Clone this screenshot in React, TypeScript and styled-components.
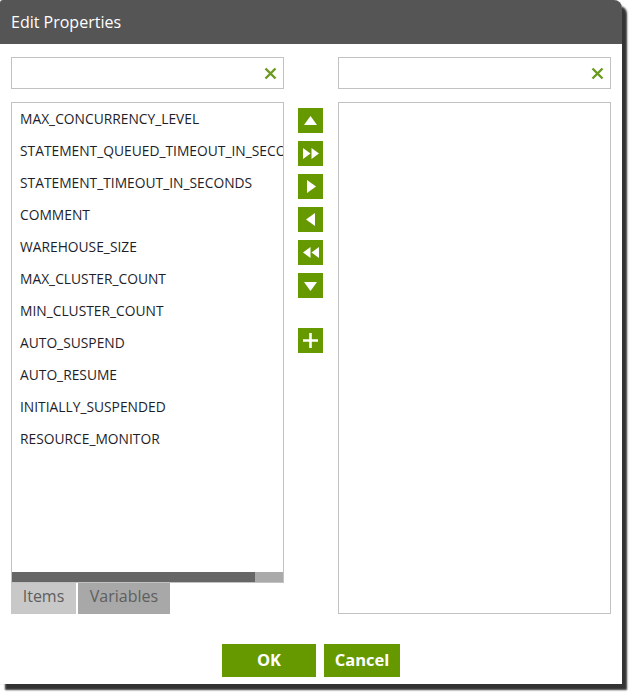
import React from "react";
import styled, { createGlobalStyle } from "styled-components";

const Global = createGlobalStyle`
  html, body { margin: 0; padding: 0; background: #ffffff; }
  body { font-family: "Open Sans", "Noto Sans", sans-serif; }
`;

const Page = styled.div`
  min-height: 100vh;
  height: 698px;
  background: #ffffff;
`;

const Dialog = styled.div`
  width: 622px;
  height: 684px;
  background: #ffffff;
  border-top-right-radius: 8px;
  border-top-left-radius: 3px;
  box-shadow: 5px 6px 2px rgba(0, 0, 0, 0.8), -1px 0 2px rgba(0, 0, 0, 0.12);
  display: flex;
  flex-direction: column;
  box-sizing: border-box;
`;

const TitleBar = styled.div`
  height: 44px;
  background: #555555;
  color: #ffffff;
  font-size: 16px;
  display: flex;
  align-items: center;
  padding-left: 11px;
  padding-bottom: 1px;
  box-sizing: border-box;
  border-top-right-radius: 8px;
  border-top-left-radius: 3px;
`;

const Body = styled.div`
  display: grid;
  grid-template-columns: 273px 54px 273px;
  padding: 13px 0 0 11px;
`;

const Column = styled.div`
  display: flex;
  flex-direction: column;
  gap: 13px;
`;

const Search = styled.div`
  height: 32px;
  border: 1px solid #c2c2c2;
  box-sizing: border-box;
  display: flex;
  align-items: center;
  justify-content: flex-end;
  padding-right: 6px;
`;

const ListBox = styled.div<{ $h: number }>`
  height: ${(p) => p.$h}px;
  border: 1px solid #c2c2c2;
  box-sizing: border-box;
  display: flex;
  flex-direction: column;
  overflow: hidden;
`;

const Items = styled.div`
  flex: 1;
  display: flex;
  flex-direction: column;
`;

const Item = styled.div`
  height: 32px;
  line-height: 32px;
  padding-left: 8px;
  font-size: 13.8px;
  color: #1e1e2a;
  white-space: nowrap;
  overflow: hidden;
`;

const ScrollBar = styled.div`
  height: 10px;
  background: #aaaaaa;
  display: flex;
`;

const Thumb = styled.div`
  width: 243px;
  background: #666666;
`;

const Tabs = styled.div`
  display: flex;
  gap: 2px;
  margin-top: -13px;
`;

const Tab = styled.div<{ $bg: string; $w: number }>`
  width: ${(p) => p.$w}px;
  height: 31px;
  background: ${(p) => p.$bg};
  color: #5e5e5e;
  font-size: 16px;
  display: flex;
  align-items: flex-start;
  justify-content: center;
  padding-top: 2px;
  box-sizing: border-box;
`;

const Middle = styled.div`
  display: flex;
  flex-direction: column;
  align-items: flex-start;
  padding: 51px 0 0 14px;
`;

const MoveGroup = styled.div`
  display: flex;
  flex-direction: column;
  gap: 8px;
  margin-bottom: 30px;
`;

const IconButton = styled.button`
  width: 25px;
  height: 25px;
  background: #669900;
  border: none;
  padding: 0;
  display: flex;
  align-items: center;
  justify-content: center;
  cursor: pointer;
`;

const Footer = styled.div`
  display: flex;
  justify-content: center;
  gap: 8px;
  padding: 30px 0 0 0;
`;

const ActionButton = styled.button<{ $w: number }>`
  width: ${(p) => p.$w}px;
  height: 33px;
  background: #669900;
  border: none;
  color: #ffffff;
  font-family: "Open Sans", "Noto Sans", sans-serif;
  font-weight: 700;
  font-size: 16.5px;
  padding: 0 0 2px 0;
  cursor: pointer;
`;

const ClearIcon = () => (
  <svg width="13" height="13" viewBox="0 0 13 13">
    <path d="M1.5 1.5 L11.5 11.5 M11.5 1.5 L1.5 11.5" stroke="#6a9a1f" strokeWidth="2.4" strokeLinecap="butt" />
  </svg>
);

const W = "#ffffff";

const Up = () => (
  <svg width="13" height="10" viewBox="0 0 13 10"><polygon points="6.5,0 13,9 0,9" fill={W} /></svg>
);
const Down = () => (
  <svg width="13" height="10" viewBox="0 0 13 10"><polygon points="0,1 13,1 6.5,10" fill={W} /></svg>
);
const Right = () => (
  <svg width="10" height="13" viewBox="0 0 10 13"><polygon points="1,0 10,6.5 1,13" fill={W} /></svg>
);
const Left = () => (
  <svg width="10" height="13" viewBox="0 0 10 13"><polygon points="9,0 9,13 0,6.5" fill={W} /></svg>
);
const FastRight = () => (
  <svg width="16" height="11" viewBox="0 0 16 11">
    <polygon points="0,0 7.5,5.5 0,11" fill={W} />
    <polygon points="8.5,0 16,5.5 8.5,11" fill={W} />
  </svg>
);
const FastLeft = () => (
  <svg width="16" height="11" viewBox="0 0 16 11">
    <polygon points="7.5,0 7.5,11 0,5.5" fill={W} />
    <polygon points="16,0 16,11 8.5,5.5" fill={W} />
  </svg>
);
const Plus = () => (
  <svg width="15" height="15" viewBox="0 0 15 15">
    <path d="M7.5 0 V15 M0 7.5 H15" stroke={W} strokeWidth="2.6" />
  </svg>
);

const items = [
  "MAX_CONCURRENCY_LEVEL",
  "STATEMENT_QUEUED_TIMEOUT_IN_SECONDS",
  "STATEMENT_TIMEOUT_IN_SECONDS",
  "COMMENT",
  "WAREHOUSE_SIZE",
  "MAX_CLUSTER_COUNT",
  "MIN_CLUSTER_COUNT",
  "AUTO_SUSPEND",
  "AUTO_RESUME",
  "INITIALLY_SUSPENDED",
  "RESOURCE_MONITOR",
];

export default function App() {
  return (
    <Page>
      <Global />
      <Dialog>
        <TitleBar>Edit Properties</TitleBar>
        <Body>
          <Column>
            <Search><ClearIcon /></Search>
            <ListBox $h={481}>
              <Items>
                {items.map((it) => (
                  <Item key={it}>{it}</Item>
                ))}
              </Items>
              <ScrollBar><Thumb /></ScrollBar>
            </ListBox>
            <Tabs>
              <Tab $bg="#c8c8c8" $w={65}>Items</Tab>
              <Tab $bg="#a8a8a8" $w={92}>Variables</Tab>
            </Tabs>
          </Column>
          <Middle>
            <MoveGroup>
              <IconButton aria-label="Move up"><Up /></IconButton>
              <IconButton aria-label="Add all"><FastRight /></IconButton>
              <IconButton aria-label="Add"><Right /></IconButton>
              <IconButton aria-label="Remove"><Left /></IconButton>
              <IconButton aria-label="Remove all"><FastLeft /></IconButton>
              <IconButton aria-label="Move down"><Down /></IconButton>
            </MoveGroup>
            <IconButton aria-label="New"><Plus /></IconButton>
          </Middle>
          <Column>
            <Search><ClearIcon /></Search>
            <ListBox $h={512} />
          </Column>
        </Body>
        <Footer>
          <ActionButton $w={94}>OK</ActionButton>
          <ActionButton $w={76}>Cancel</ActionButton>
        </Footer>
      </Dialog>
    </Page>
  );
}
